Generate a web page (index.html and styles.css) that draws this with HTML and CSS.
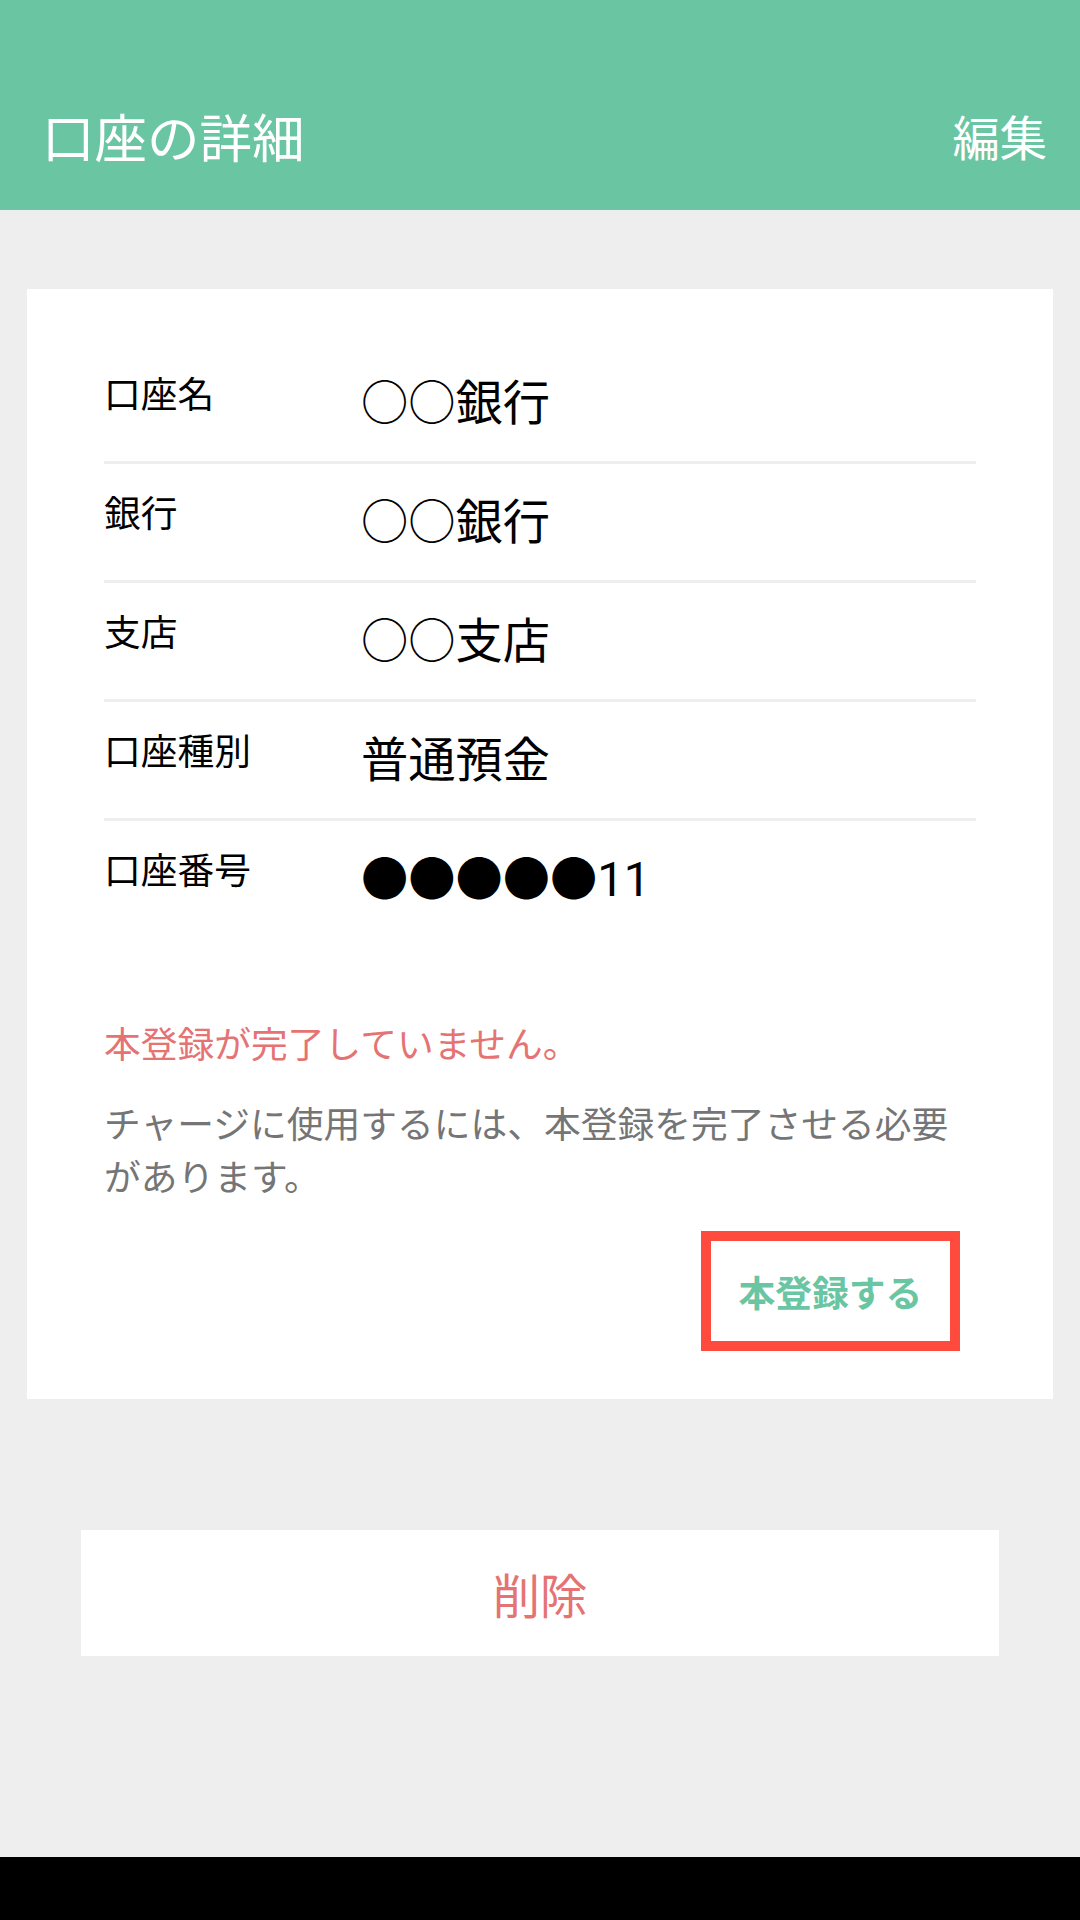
FILE: index.html
```html
<!DOCTYPE html>
<html lang="ja">
<head>
<meta charset="utf-8">
<title>口座の詳細</title>
<link rel="stylesheet" href="styles.css">
</head>
<body>
<div class="screen">
  <header class="appbar">
    <h1 class="appbar-title">口座の詳細</h1>
    <span class="appbar-action">編集</span>
  </header>
  <main class="content">
    <section class="card">
      <div class="row">
        <div class="label">口座名</div>
        <div class="value">○○銀行</div>
      </div>
      <div class="row">
        <div class="label">銀行</div>
        <div class="value">○○銀行</div>
      </div>
      <div class="row">
        <div class="label">支店</div>
        <div class="value">○○支店</div>
      </div>
      <div class="row">
        <div class="label">口座種別</div>
        <div class="value">普通預金</div>
      </div>
      <div class="row row-last">
        <div class="label">口座番号</div>
        <div class="value">●●●●●11</div>
      </div>
      <p class="notice-title">本登録が完了していません。</p>
      <p class="notice-body">チャージに使用するには、本登録を完了させる必要があります。</p>
      <div class="actions">
        <button class="register-btn">本登録する</button>
      </div>
    </section>
    <button class="delete-btn">削除</button>
  </main>
  <div class="navbar"></div>
</div>
</body>
</html>
```

FILE: styles.css
```css
* { box-sizing: border-box; }
html, body { margin: 0; padding: 0; }
body {
  background: #eeeeee;
  font-family: Roboto, "Noto Sans CJK JP", sans-serif;
}
.screen {
  width: 1080px;
  height: 1920px;
  display: flex;
  flex-direction: column;
  background: #eeeeee;
}
.appbar {
  height: 210px;
  background: #6ac5a3;
  display: flex;
  align-items: center;
  justify-content: space-between;
  padding: 70px 33px 0 42px;
  color: #ffffff;
  flex-shrink: 0;
}
.appbar-title {
  margin: 0;
  font-weight: 400;
  font-size: 52.5px;
  line-height: 60px;
}
.appbar-action {
  font-size: 47.25px;
  line-height: 60px;
}
.content {
  padding-top: 79px;
  display: flex;
  flex-direction: column;
}
.card {
  background: #ffffff;
  margin: 0 27px;
  padding: 56px 77px 48px 77px;
}
.row {
  display: flex;
  align-items: flex-start;
  padding: 31px 0 29px 0;
  border-bottom: 3px solid #eeeeee;
}
.row-last { border-bottom: none; }
.label {
  width: 257px;
  flex-shrink: 0;
  font-size: 36.75px;
  line-height: 40px;
  color: #000000;
}
.value {
  font-size: 47.25px;
  line-height: 56px;
  color: #000000;
}
.notice-title {
  margin: 82px 0 0 0;
  font-size: 36.75px;
  line-height: 53px;
  color: #e57373;
}
.notice-body {
  margin: 27px 0 0 0;
  font-size: 36.75px;
  line-height: 53px;
  color: #757575;
}
.actions {
  display: flex;
  justify-content: flex-end;
  margin-top: 26px;
  padding-right: 16px;
}
.register-btn {
  width: 259px;
  height: 120px;
  border: 10px solid #ff4b3e;
  background: #ffffff;
  color: #6ac5a3;
  font-family: Roboto, "Noto Sans CJK JP", sans-serif;
  font-weight: 700;
  font-size: 36.75px;
  padding: 0;
}
.delete-btn {
  margin: 131px 81px 0 81px;
  height: 126px;
  border: none;
  background: #ffffff;
  color: #e57373;
  font-family: Roboto, "Noto Sans CJK JP", sans-serif;
  font-size: 47.25px;
  padding: 0;
}
.navbar {
  margin-top: auto;
  height: 63px;
  background: #000000;
  flex-shrink: 0;
}
```
